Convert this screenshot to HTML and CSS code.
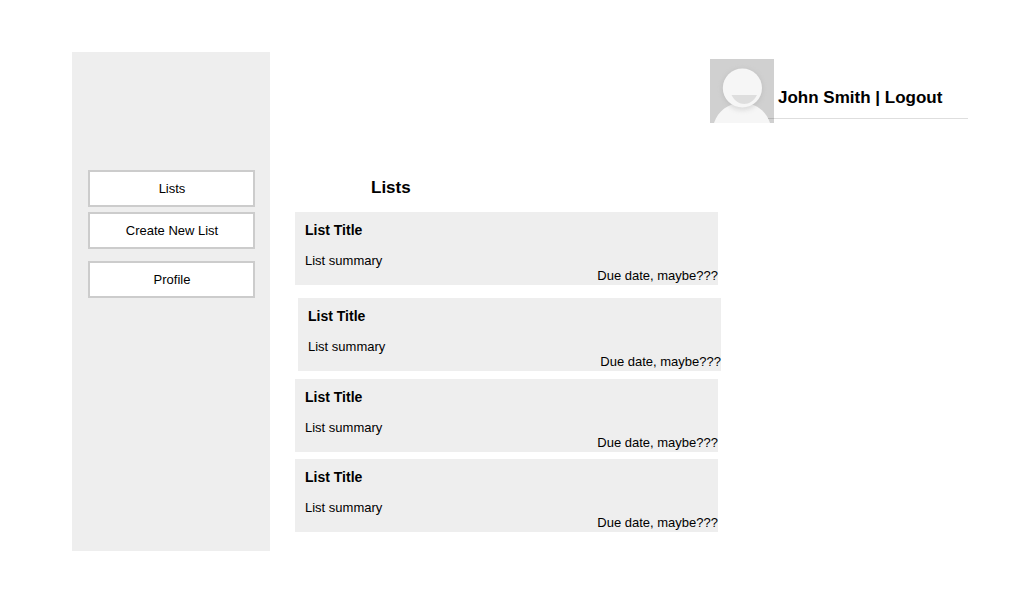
FILE: index.html
```html
<!DOCTYPE html>
<html lang="en">
<head>
<meta charset="utf-8">
<meta name="viewport" content="width=device-width, initial-scale=1">
<title>Lists</title>
<link rel="stylesheet" href="styles.css">
</head>
<body>
<div class="page">
  <nav class="sidebar" aria-label="Main">
    <button class="nav-button" type="button">Lists</button>
    <button class="nav-button" type="button">Create New List</button>
    <button class="nav-button nav-button-profile" type="button">Profile</button>
  </nav>
  <div class="content">
    <header class="user-bar">
      <svg class="avatar" viewBox="0 0 64 64" role="img" aria-label="User avatar">
        <defs>
          <filter id="soft" x="-30%" y="-30%" width="160%" height="160%">
            <feGaussianBlur stdDeviation="2.5"/>
          </filter>
          <clipPath id="body-clip">
            <path d="M4 64C8 52 18 44 32 44S56 52 60 64Z"/>
          </clipPath>
        </defs>
        <rect width="64" height="64" fill="#d0d0d0"/>
        <circle cx="32.400" cy="30" r="20" fill="#999" opacity="0.3" filter="url(#soft)"/>
        <path d="M4 64C8 52 18 44 32 44S56 52 60 64Z" fill="#f6f6f6"/>
        <g clip-path="url(#body-clip)">
          <circle cx="32.400" cy="31" r="20" fill="#999" opacity="0.3" filter="url(#soft)"/>
        </g>
        <circle cx="32.400" cy="29" r="19.600" fill="#f6f6f6"/>
        <path d="M21.500 36H47C44 42 39 45 34.200 45S24.500 42 21.500 36Z" fill="#dedede"/>
      </svg>
      <div class="user-links">John Smith | <a class="logout" href="#">Logout</a></div>
    </header>
    <main>
      <h1 class="heading">Lists</h1>
      <div class="lists">
        <article class="card">
          <h2 class="card-title">List Title</h2>
          <p class="card-summary">List summary</p>
          <p class="card-due">Due date, maybe???</p>
        </article>
        <article class="card card-shifted">
          <h2 class="card-title">List Title</h2>
          <p class="card-summary">List summary</p>
          <p class="card-due">Due date, maybe???</p>
        </article>
        <article class="card">
          <h2 class="card-title">List Title</h2>
          <p class="card-summary">List summary</p>
          <p class="card-due">Due date, maybe???</p>
        </article>
        <article class="card">
          <h2 class="card-title">List Title</h2>
          <p class="card-summary">List summary</p>
          <p class="card-due">Due date, maybe???</p>
        </article>
      </div>
    </main>
  </div>
</div>
</body>
</html>
```

FILE: styles.css
```css
* {
  box-sizing: border-box;
}

body {
  margin: 0;
  background: #fff;
  color: #000;
  font: 13px/15px "Liberation Sans", Arial, sans-serif;
}

h1,
h2,
p {
  margin: 0;
}

.page {
  display: grid;
  grid-template-columns: 198px minmax(0, 1fr);
  gap: 25px;
  min-height: 100vh;
  padding: 52px 64px 42px 72px;
}

.sidebar {
  display: flex;
  flex-direction: column;
  gap: 5px;
  padding: 118px 15px 16px 16px;
  background: #eee;
}

.nav-button {
  padding: 9px 8px 9px 9px;
  border: 2px solid #ccc;
  border-radius: 0;
  background: #fff;
  color: inherit;
  font: inherit;
  cursor: pointer;
}

.nav-button-profile {
  margin-top: 7px;
}

.content {
  padding-top: 7px;
}

.user-bar {
  display: flex;
  justify-content: flex-end;
  align-items: flex-start;
}

.avatar {
  display: block;
  flex: none;
  width: 64px;
  height: 64px;
}

.user-links {
  width: 200px;
  margin-left: -6px;
  padding: 29px 0 10px 10px;
  border-bottom: 1px solid rgba(0, 0, 0, 0.13);
  font-size: 17px;
  font-weight: bold;
  line-height: 20px;
}

.logout {
  color: inherit;
  text-decoration: none;
}

.heading {
  margin: 55px 0 14px 76px;
  font-size: 17px;
  line-height: 20px;
}

.lists {
  max-width: 423px;
}

.card {
  margin-bottom: 7px;
  padding: 10px 0 2px 10px;
  background: #eee;
}

.card-shifted {
  margin: 13px -3px 8px 3px;
}

.card-title {
  margin-bottom: 15px;
  font-size: 14px;
  line-height: 16px;
}

.card-due {
  text-align: right;
}
```
